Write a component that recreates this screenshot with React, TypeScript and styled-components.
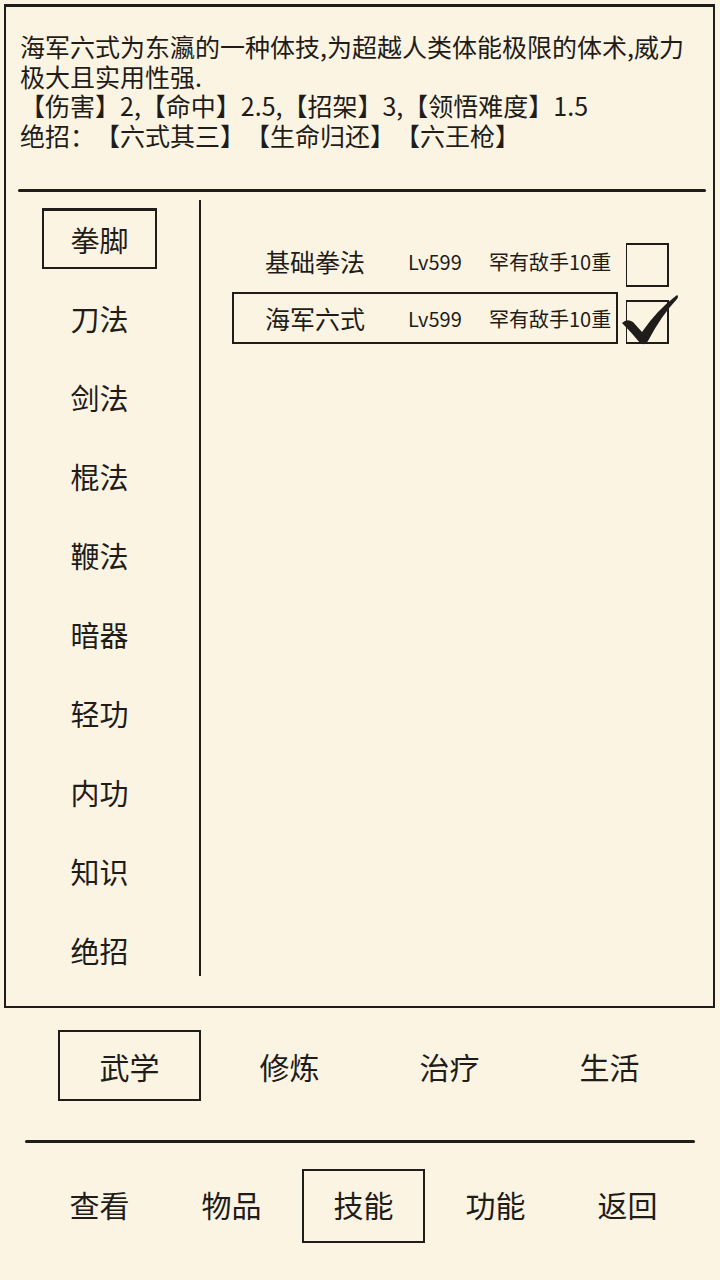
import React from "react";
import styled, { createGlobalStyle } from "styled-components";

const ink = "#1f1c19";
const paper = "#fbf4e3";

const Global = createGlobalStyle`
  html, body {
    margin: 0;
    padding: 0;
    background: ${paper};
  }
  body {
    font-family: "Noto Sans CJK SC", "Noto Sans", sans-serif;
    color: ${ink};
    text-spacing-trim: space-all;
  }
`;

const Page = styled.div`
  width: 720px;
  height: 1280px;
  display: flex;
  flex-direction: column;
  background: ${paper};
  overflow: hidden;
`;

const Panel = styled.section`
  margin: 4px 5px 0 4px;
  height: 1004px;
  border: 2px solid ${ink};
  border-top-width: 3px;
  display: flex;
  flex-direction: column;
  box-sizing: border-box;
`;

const Description = styled.div`
  height: 182px;
  padding: 25px 6px 0 14px;
  box-sizing: border-box;
  font-size: 25px;
  line-height: 29.5px;
`;

const Line = styled.div`
  white-space: nowrap;
`;

const Rule = styled.div<{ $left: number; $right: number; $top?: number }>`
  height: 3px;
  background: ${ink};
  margin: ${(p) => p.$top ?? 0}px ${(p) => p.$right}px 0 ${(p) => p.$left}px;
  border-radius: 2px;
  flex-shrink: 0;
`;

const Body = styled.div`
  flex: 1;
  display: flex;
`;

const SideNav = styled.nav`
  width: 193px;
  display: flex;
  flex-direction: column;
  align-items: flex-start;
  padding: 16px 0 0 36px;
  box-sizing: border-box;
  gap: 18px;
`;

const NavItem = styled.div<{ $active?: boolean }>`
  width: 115px;
  height: 61px;
  box-sizing: border-box;
  display: flex;
  align-items: center;
  justify-content: center;
  font-size: 29px;
  border: 2px solid ${(p) => (p.$active ? ink : "transparent")};
  border-top-width: 3px;
`;

const VLine = styled.div`
  width: 2px;
  margin: 8px 0 30px;
  background: ${ink};
`;

const SkillList = styled.div`
  flex: 1;
  display: flex;
  flex-direction: column;
  padding: 43px 0 0 31px;
  gap: 5px;
`;

const SkillRow = styled.div`
  display: flex;
  align-items: flex-start;
`;

const SkillBox = styled.div<{ $active?: boolean }>`
  width: 386px;
  height: 52px;
  box-sizing: border-box;
  border: 2px solid ${(p) => (p.$active ? ink : "transparent")};
  display: flex;
  align-items: center;
  padding-left: 31px;
`;

const SkillName = styled.span`
  width: 143px;
  font-size: 25px;
`;

const SkillLevel = styled.span`
  width: 81px;
  font-size: 20px;
`;

const SkillRank = styled.span`
  font-size: 20px;
`;

const Check = styled.div`
  position: relative;
  width: 43px;
  height: 44px;
  margin: 8px 0 0 8px;
  box-sizing: border-box;
  border: 2px solid ${ink};
  border-left-width: 1.5px;
`;

const Tick = styled.svg`
  position: absolute;
  left: -8px;
  top: -10px;
  width: 62px;
  height: 60px;
  overflow: visible;
`;

const TabRow = styled.div`
  display: flex;
  gap: 17px;
  padding-left: 58px;
  margin-top: 22px;
`;

const Tab = styled.div<{ $active?: boolean; $w: number; $h: number; $lift?: number }>`
  width: ${(p) => p.$w}px;
  height: ${(p) => p.$h}px;
  box-sizing: border-box;
  display: flex;
  align-items: center;
  justify-content: center;
  padding-bottom: ${(p) => p.$lift ?? 0}px;
  font-size: 30px;
  border: 2px solid ${(p) => (p.$active ? ink : "transparent")};
`;

const BottomNav = styled.div`
  display: flex;
  gap: 9px;
  padding-left: 38px;
  margin-top: 26px;
`;

const categories = ["拳脚", "刀法", "剑法", "棍法", "鞭法", "暗器", "轻功", "内功", "知识", "绝招"];
const tabs = ["武学", "修炼", "治疗", "生活"];
const menu = ["查看", "物品", "技能", "功能", "返回"];

const skills = [
  { name: "基础拳法", level: "Lv599", rank: "罕有敌手10重", active: false },
  { name: "海军六式", level: "Lv599", rank: "罕有敌手10重", active: true },
];

export default function App() {
  return (
    <Page>
      <Global />
      <Panel>
        <Description>
          <Line>海军六式为东瀛的一种体技,为超越人类体能极限的体术,威力</Line>
          <Line>极大且实用性强.</Line>
          <Line>【伤害】2,【命中】2.5,【招架】3,【领悟难度】1.5</Line>
          <Line>绝招：【六式其三】【生命归还】【六王枪】</Line>
        </Description>
        <Rule $left={12} $right={7} />
        <Body>
          <SideNav>
            {categories.map((c, i) => (
              <NavItem key={c} $active={i === 0}>
                {c}
              </NavItem>
            ))}
          </SideNav>
          <VLine />
          <SkillList>
            {skills.map((s) => (
              <SkillRow key={s.name}>
                <SkillBox $active={s.active}>
                  <SkillName>{s.name}</SkillName>
                  <SkillLevel>{s.level}</SkillLevel>
                  <SkillRank>{s.rank}</SkillRank>
                </SkillBox>
                <Check>
                  {s.active && (
                    <Tick viewBox="-8 -10 62 60">
                      {/* brush-stroke tick, box-relative coordinates */}
                      <path
                        d="M-5 21 Q0 16 6 20 L15 30 Q30 8 50 -7 Q52 -6 50 -3 Q34 14 21 39 Q18 44 13 41 Q5 31 -5 21 Z"
                        fill={ink}
                      />
                    </Tick>
                  )}
                </Check>
              </SkillRow>
            ))}
          </SkillList>
        </Body>
      </Panel>
      <TabRow>
        {tabs.map((t, i) => (
          <Tab key={t} $active={i === 0} $w={143} $h={71}>
            {t}
          </Tab>
        ))}
      </TabRow>
      <Rule $left={25} $right={25} $top={39} />
      <BottomNav>
        {menu.map((m, i) => (
          <Tab key={m} $active={i === 2} $w={123} $h={74} $lift={4}>
            {m}
          </Tab>
        ))}
      </BottomNav>
    </Page>
  );
}
